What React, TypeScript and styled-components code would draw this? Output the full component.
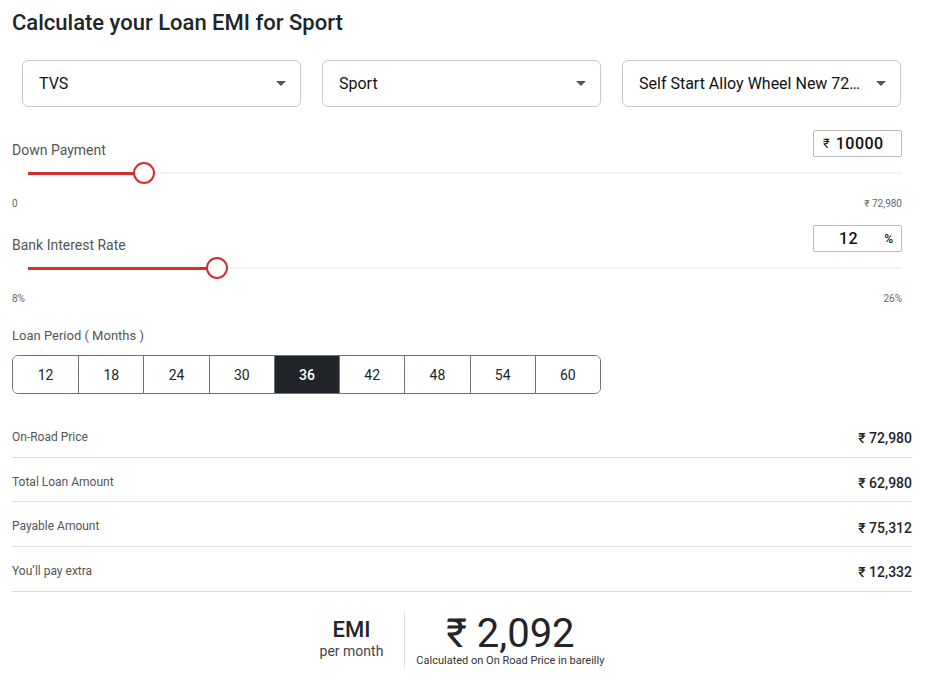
import styled, { createGlobalStyle } from 'styled-components';

const GlobalStyle = createGlobalStyle`
  body {
    margin: 0;
    background: #fff;
    font-family: Roboto, "Liberation Sans", sans-serif;
    color: #212529;
  }
`;

const red = '#d32f2f';

const Page = styled.div`
  width: 900px;
  padding: 0 12px 12px;
`;

const Title = styled.h1`
  margin: 0;
  padding-top: 10px;
  font-size: 22px;
  line-height: 26px;
  font-weight: 500;
  color: #212529;
`;

const SelectRow = styled.div`
  display: grid;
  grid-template-columns: repeat(3, minmax(0, 1fr));
  gap: 21px;
  margin: 24px 11px 0 10px;
`;

const Select = styled.div`
  height: 47px;
  min-width: 0;
  box-sizing: border-box;
  border: 1px solid #c8c8c8;
  border-radius: 6px;
  display: flex;
  align-items: center;
  justify-content: space-between;
  padding: 0 14px 0 16px;
  font-size: 16px;
  color: #111;
  span {
    white-space: nowrap;
    overflow: hidden;
    text-overflow: ellipsis;
  }
`;

const Caret = styled.i`
  flex: none;
  margin-left: 14px;
  width: 0;
  height: 0;
  border-left: 5px solid transparent;
  border-right: 5px solid transparent;
  border-top: 5px solid #555;
`;

const SliderBlock = styled.div`
  margin-top: ${p => p.$top}px;
  width: 890px;
`;

const SliderHead = styled.div`
  display: flex;
  justify-content: space-between;
  align-items: flex-end;
`;

const Label = styled.div`
  font-size: 14px;
  line-height: 14px;
  color: #555;
`;

const ValueBox = styled.div`
  width: 89px;
  height: 27px;
  box-sizing: border-box;
  border: 1px solid #bbb;
  border-radius: 2px;
  display: flex;
  align-items: center;
  padding: 0 8px 0 9px;
  color: #111;
  .cur {
    font-size: 13px;
    margin-right: 6px;
  }
  .num {
    font-size: 16px;
    font-weight: 500;
    letter-spacing: 0.5px;
  }
  .num.right {
    margin-left: 16px;
  }
  .pct {
    font-size: 12px;
    font-weight: 500;
    margin-left: auto;
  }
`;

const Track = styled.div`
  position: relative;
  height: 30px;
  margin: 1px 24px 0 16px;
`;

const Rail = styled.div`
  position: absolute;
  left: 0;
  right: -24px;
  top: 50%;
  height: 2px;
  margin-top: -1px;
  background: #f3f3f3;
`;

const Fill = styled.div`
  position: absolute;
  left: 0;
  top: 50%;
  height: 3px;
  margin-top: -1.5px;
  background: ${red};
`;

const Thumb = styled.div`
  position: absolute;
  top: 50%;
  width: 22px;
  height: 22px;
  box-sizing: border-box;
  margin: -11px 0 0 -11px;
  border: 2px solid ${red};
  border-radius: 50%;
  background: #fff;
`;

const Range = styled.div`
  display: flex;
  justify-content: space-between;
  margin-top: 10px;
  font-size: 10px;
  line-height: 12px;
  color: #666;
`;

const PeriodLabel = styled(Label)`
  margin-top: 24px;
  font-size: 13px;
`;

const Periods = styled.div`
  display: grid;
  grid-template-columns: repeat(9, 1fr);
  width: 589px;
  height: 39px;
  box-sizing: border-box;
  margin-top: 12px;
  border: 1px solid #6c757d;
  border-radius: 6px;
  overflow: hidden;
`;

const PeriodBtn = styled.div`
  display: flex;
  align-items: center;
  justify-content: center;
  font-size: 14px;
  color: ${p => (p.$active ? '#fff' : '#212529')};
  background: ${p => (p.$active ? '#212529' : '#fff')};
  border-left: ${p => (p.$first ? 'none' : '1px solid #6c757d')};
  font-weight: ${p => (p.$active ? 500 : 400)};
`;

const Summary = styled.div`
  margin-top: 19px;
`;

const Row = styled.div`
  display: flex;
  justify-content: space-between;
  align-items: center;
  height: 44.7px;
  box-sizing: border-box;
  border-bottom: 1px solid #dcdcdc;
  padding-top: 7px;
`;

const RowLabel = styled.span`
  font-size: 12px;
  color: #555;
  margin-bottom: 3px;
`;

const RowValue = styled.span`
  font-size: 14px;
  font-weight: 500;
  color: #212529;
`;

const Emi = styled.div`
  display: flex;
  justify-content: center;
  align-items: stretch;
  margin-top: 21px;
`;

const EmiLeft = styled.div`
  display: flex;
  flex-direction: column;
  align-items: center;
  justify-content: center;
  padding-right: 21px;
  border-right: 1px solid #ddd;
  .big {
    font-size: 22px;
    font-weight: 500;
    line-height: 22px;
  }
  .small {
    font-size: 14px;
    color: #444;
    line-height: 20px;
  }
`;

const EmiRight = styled.div`
  display: flex;
  flex-direction: column;
  align-items: center;
  padding-left: 11px;
  .amt {
    font-size: 40px;
    line-height: 42px;
    color: #212529;
  }
  .note {
    font-size: 11px;
    color: #333;
    line-height: 13px;
    margin-top: -1px;
  }
`;

type SliderProps = {
  label: string;
  pct: number;
  min: string;
  max: string;
  top: number;
  box: JSX.Element;
};

const Slider = ({ label, pct, min, max, top, box }: SliderProps) => (
  <SliderBlock $top={top}>
    <SliderHead>
      <Label>{label}</Label>
      {box}
    </SliderHead>
    <Track>
      <Rail />
      <Fill style={{ width: `${pct}%` }} />
      <Thumb style={{ left: `${pct}%` }} />
    </Track>
    <Range>
      <span>{min}</span>
      <span>{max}</span>
    </Range>
  </SliderBlock>
);

const months = [12, 18, 24, 30, 36, 42, 48, 54, 60];

const rows = [
  ['On-Road Price', '₹ 72,980'],
  ['Total Loan Amount', '₹ 62,980'],
  ['Payable Amount', '₹ 75,312'],
  ['You’ll pay extra', '₹ 12,332'],
];

const App = () => (
  <Page>
    <GlobalStyle />
    <Title>Calculate your Loan EMI for Sport</Title>
    <SelectRow>
      <Select>
        <span>TVS</span>
        <Caret />
      </Select>
      <Select>
        <span>Sport</span>
        <Caret />
      </Select>
      <Select>
        <span>Self Start Alloy Wheel New 72,980</span>
        <Caret />
      </Select>
    </SelectRow>
    <Slider
      top={23}
      label="Down Payment"
      pct={(10000 / 72980) * 100}
      min="0"
      max="₹ 72,980"
      box={
        <ValueBox>
          <span className="cur">₹</span>
          <span className="num">10000</span>
        </ValueBox>
      }
    />
    <Slider
      top={15}
      label="Bank Interest Rate"
      pct={((12 - 8) / 18) * 100}
      min="8%"
      max="26%"
      box={
        <ValueBox>
          <span className="num right">12</span>
          <span className="pct">%</span>
        </ValueBox>
      }
    />
    <PeriodLabel>Loan Period ( Months )</PeriodLabel>
    <Periods>
      {months.map((m, i) => (
        <PeriodBtn key={m} $first={i === 0} $active={m === 36}>
          {m}
        </PeriodBtn>
      ))}
    </Periods>
    <Summary>
      {rows.map(([l, v]) => (
        <Row key={l}>
          <RowLabel>{l}</RowLabel>
          <RowValue>{v}</RowValue>
        </Row>
      ))}
    </Summary>
    <Emi>
      <EmiLeft>
        <span className="big">EMI</span>
        <span className="small">per month</span>
      </EmiLeft>
      <EmiRight>
        <span className="amt">₹ 2,092</span>
        <span className="note">Calculated on On Road Price in bareilly</span>
      </EmiRight>
    </Emi>
  </Page>
);

export default App;
